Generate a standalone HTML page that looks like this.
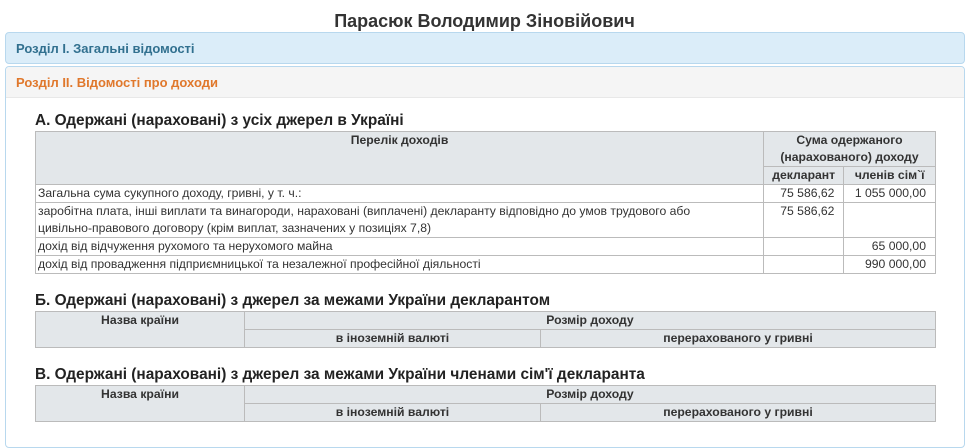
<!DOCTYPE html>
<html><head><meta charset="utf-8"><style>
body{margin:0;width:969px;height:429px;overflow:hidden;background:#fff;font-family:"Liberation Sans",Arial,sans-serif;color:#333}
h1{font-size:18px;text-align:center;margin:0;position:absolute;top:10px;left:0;width:969px;line-height:22px;color:#333}
.p1{position:absolute;left:5px;top:32px;width:958px;height:30px;background:#dbedf9;border:1px solid #b8d8ee;border-radius:4px}
.p1 span{position:absolute;left:10px;top:8px;font-size:13px;font-weight:bold;color:#31708f}
.p2{position:absolute;left:5px;top:66px;width:958px;height:380px;border:1px solid #b8d8ee;border-radius:4px;background:#fff}
.p2h{height:30px;background:#f5f5f5;border-bottom:1px solid #e8e8e8;border-radius:4px 4px 0 0}
.p2h span{position:absolute;left:10px;top:8px;font-size:13px;font-weight:bold;color:#e0782c}
h4{position:absolute;left:35px;margin:0;font-size:15.4px;font-weight:bold;color:#222}
table{position:absolute;left:35px;width:901px;border-collapse:collapse;font-size:12.2px;color:#333}
td,th{border:1px solid #bbb;padding:0 2px;line-height:17px;vertical-align:top}
th{background:#e3e7ea;font-weight:bold;text-align:center;color:#333}
.r{text-align:right;padding-right:9px}
</style></head><body>
<h1>Парасюк Володимир Зіновійович</h1>
<div class="p1"><span>Розділ I. Загальні відомості</span></div>
<div class="p2"><div class="p2h"><span>Розділ II. Відомості про доходи</span></div></div>
<h4 style="top:112px">А. Одержані (нараховані) з усіх джерел в Україні</h4>
<table style="top:131px">
<tr><th rowspan="2" style="height:52px">Перелік доходів</th><th colspan="2" style="width:167px;height:34px">Сума одержаного (нарахованого) доходу</th></tr>
<tr><th style="width:75px">декларант</th><th style="width:86px">членів сім`ї</th></tr>
<tr><td>Загальна сума сукупного доходу, гривні, у т. ч.:</td><td class="r">75 586,62</td><td class="r">1 055 000,00</td></tr>
<tr><td style="height:33px">заробітна плата, інші виплати та винагороди, нараховані (виплачені) декларанту відповідно до умов трудового або<br>цивільно-правового договору (крім виплат, зазначених у позиціях 7,8)</td><td class="r">75 586,62</td><td></td></tr>
<tr><td>дохід від відчуження рухомого та нерухомого майна</td><td></td><td class="r">65 000,00</td></tr>
<tr><td>дохід від провадження підприємницької та незалежної професійної діяльності</td><td></td><td class="r">990 000,00</td></tr>
</table>
<h4 style="top:292px">Б. Одержані (нараховані) з джерел за межами України декларантом</h4>
<table style="top:311px">
<tr><th rowspan="2" style="width:204px">Назва країни</th><th colspan="2">Розмір доходу</th></tr>
<tr><th style="width:291px">в іноземній валюті</th><th>перерахованого у гривні</th></tr>
</table>
<h4 style="top:366px">В. Одержані (нараховані) з джерел за межами України членами сім'ї декларанта</h4>
<table style="top:385px">
<tr><th rowspan="2" style="width:204px">Назва країни</th><th colspan="2">Розмір доходу</th></tr>
<tr><th style="width:291px">в іноземній валюті</th><th>перерахованого у гривні</th></tr>
</table>
</body></html>
